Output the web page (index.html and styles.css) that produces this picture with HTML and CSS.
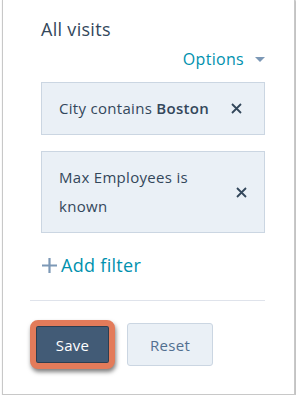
FILE: index.html
```html
<!DOCTYPE html>
<html lang="en">
<head>
    <meta charset="UTF-8">
    <meta name="viewport" content="width=device-width, initial-scale=1.0">
    <title>All visits</title>
    <link rel="stylesheet" href="styles.css">
</head>
<body>
    <div class="panel">
        <div class="filters">
            <h2 class="title">All visits</h2>
            <div class="options-row">
                <a class="options">Options <span class="caret"></span></a>
            </div>
            <div class="filter">
                <span class="filter-text">City contains <b>Boston</b></span>
                <span class="close">
                    <svg width="11" height="11" viewBox="0 0 11 11"><path d="M1 1L10 10M10 1L1 10" stroke="#33475b" stroke-width="1.8" fill="none"/></svg>
                </span>
            </div>
            <div class="filter">
                <span class="filter-text">Max Employees is known</span>
                <span class="close">
                    <svg width="11" height="11" viewBox="0 0 11 11"><path d="M1 1L10 10M10 1L1 10" stroke="#33475b" stroke-width="1.8" fill="none"/></svg>
                </span>
            </div>
            <a class="add-filter">
                <svg width="17" height="17" viewBox="0 0 17 17"><path d="M8.5 1V16M1 8.5H16" stroke="#7c98b6" stroke-width="2.2" fill="none"/></svg>Add filter
            </a>
        </div>
        <hr class="divider">
        <div class="actions">
            <button class="btn btn-save">Save</button>
            <button class="btn btn-reset">Reset</button>
        </div>
    </div>
</body>
</html>
```

FILE: styles.css
```css
body {
    margin: 0;
    background: #fff;
    font-family: "Open Sans", Lato, sans-serif;
    letter-spacing: 0.3px;
    color: #33475b;
    overflow: hidden;
}

.panel {
    box-sizing: border-box;
    width: 293px;
    height: 396px;
    margin: -1px 0 0 2px;
    padding: 17px 29px 0 27px;
    background: #fff;
    border: 1px solid #c8c8c8;
    box-shadow: 1px 1px 2px rgba(0, 0, 0, 0.35);
}

.filters {
    padding-left: 11px;
}

.title {
    margin: 0;
    font-size: 18px;
    font-weight: normal;
    line-height: 24px;
}

.options-row {
    display: flex;
    justify-content: flex-end;
    margin-top: 6px;
    line-height: 24px;
}

.options {
    display: flex;
    align-items: center;
    color: #0091ae;
    font-size: 16px;
}

.caret {
    width: 0;
    height: 0;
    margin-left: 11px;
    border-left: 5px solid transparent;
    border-right: 5px solid transparent;
    border-top: 5px solid #7c98b6;
}

.filter {
    display: flex;
    align-items: center;
    margin-top: 11px;
    padding: 11px 17px;
    background: #eaf0f6;
    border: 1px solid #cbd6e2;
    font-size: 15px;
    line-height: 29px;
}

.filter + .filter {
    margin-top: 16px;
}

.filter-text b {
    font-weight: 600;
}

.close {
    display: flex;
    margin-left: 22px;
}

.add-filter {
    display: flex;
    align-items: center;
    margin-top: 20px;
    color: #0091ae;
    font-size: 18px;
    line-height: 24px;
}

.add-filter svg {
    margin-right: 3px;
}

.divider {
    margin: 23px 0 0;
    border: none;
    border-top: 1px solid #dfe3eb;
}

.actions {
    display: flex;
    align-items: center;
    margin-top: 19px;
}

.btn {
    font-family: "Open Sans", Lato, sans-serif;
    font-size: 15px;
    letter-spacing: 0.3px;
    cursor: pointer;
}

.btn-save {
    width: 85px;
    height: 49px;
    color: #fff;
    background: #425b76;
    border: 6px solid #e37b5a;
    border-radius: 8px;
    box-shadow: inset 0 0 0 1px #2d3e50, 1px 3px 4px rgba(0, 0, 0, 0.5);
}

.btn-reset {
    width: 86px;
    height: 43px;
    margin-left: 12px;
    color: #516f90;
    background: #eaf0f6;
    border: 1px solid #cbd6e2;
    border-radius: 3px;
}
```
